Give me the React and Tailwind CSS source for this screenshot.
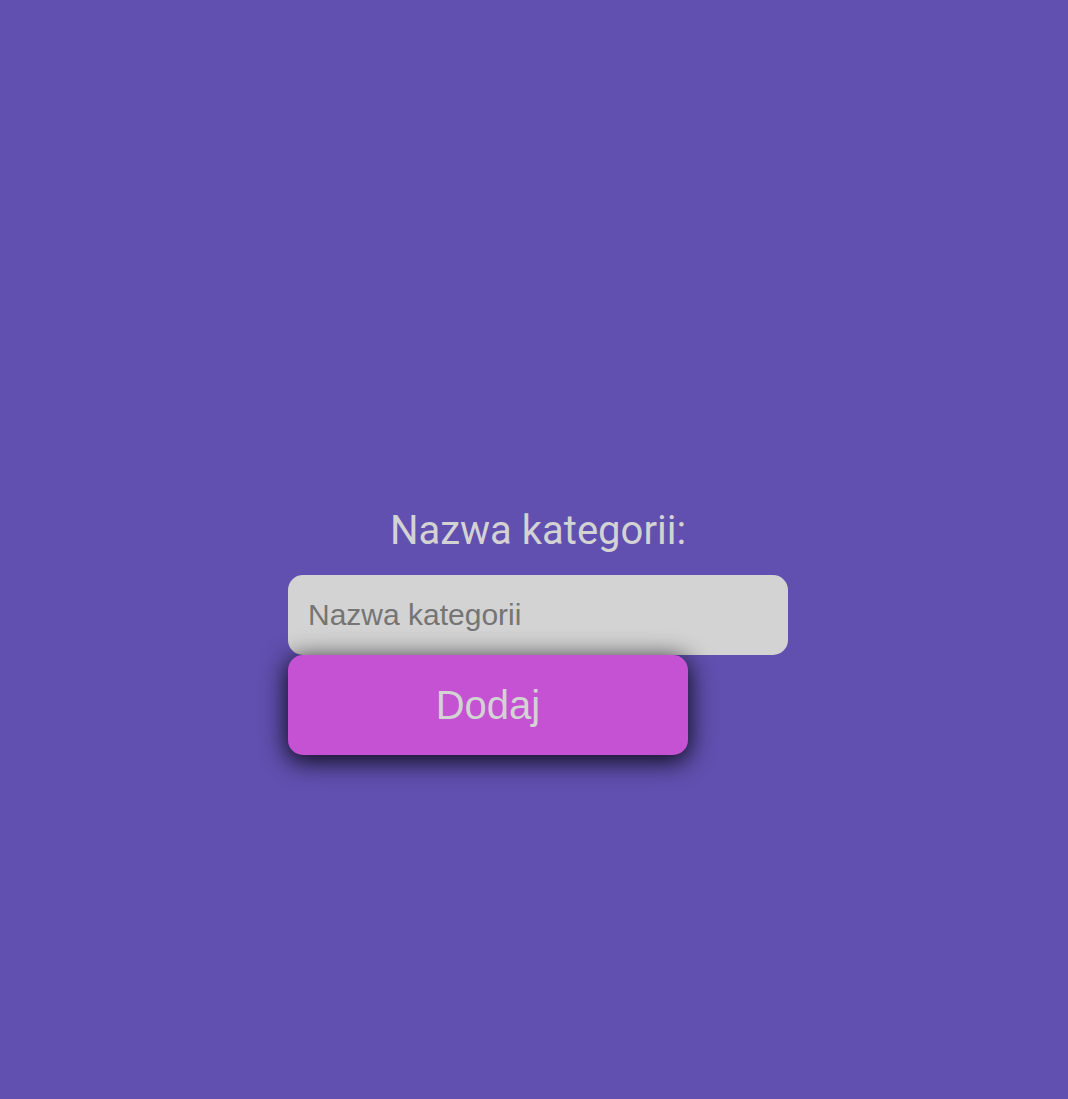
export default function App() {
  return (
    <div className="min-h-screen w-full bg-[#6150b0] pt-[507px]">
      <form
        className="ml-[288px] flex w-[500px] flex-col items-start"
        onSubmit={e => e.preventDefault()}
      >
        <label
          htmlFor="category"
          className="block w-full text-center font-['Roboto',sans-serif] text-[40px] leading-[47px] text-[#d3d3d3]"
        >
          Nazwa kategorii:
        </label>
        <input
          id="category"
          type="text"
          placeholder="Nazwa kategorii"
          className="mt-[21px] h-[80px] w-[500px] rounded-[15px] bg-[#d3d3d3] px-[20px] font-['Liberation_Sans',Arial,sans-serif] text-[30px] text-[#333] outline-none placeholder:text-[#757575]"
        />
        <button
          type="submit"
          className="relative h-[100px] w-[400px] rounded-[15px] bg-[#c452d2] font-['Liberation_Sans',Arial,sans-serif] text-[40px] text-[#d3d3d3] shadow-[0_5px_25px_2px_rgba(0,0,0,0.85)]"
        >
          Dodaj
        </button>
      </form>
    </div>
  )
}
